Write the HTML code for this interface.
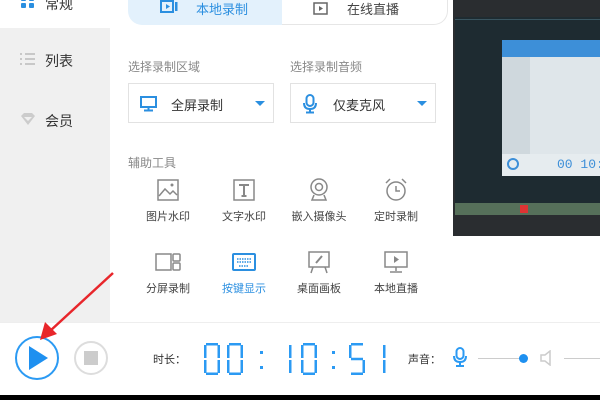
<!DOCTYPE html>
<html><head><meta charset="utf-8"><style>
*{margin:0;padding:0;box-sizing:border-box}
body{width:600px;height:400px;overflow:hidden;background:#fff;position:relative;font-family:"Liberation Sans","Noto Sans CJK SC",sans-serif;color:#333}
.a{position:absolute}
.side{left:0;top:28px;width:110px;height:294px;background:#f0f0f0}
.lbl{font-size:12px;color:#888}
.dd{border:1px solid #e2e2e2;background:#fff;height:40px;width:146px}
.dd span{position:absolute;left:42px;top:11px;font-size:13px;color:#333}
.tri{position:absolute;right:8px;top:17px;width:0;height:0;border-left:5px solid transparent;border-right:5px solid transparent;border-top:5px solid #2b8fe0}
.tool{position:absolute;width:70px;text-align:center;font-size:11px;color:#444}
.tool .ic{height:24px;margin-bottom:6px;display:flex;align-items:center;justify-content:center}
</style></head><body>
<div class="a side"></div>
<svg class="a" style="left:21px;top:-4px" width="14" height="12"><g fill="#2b8fe0"><rect x="0" y="0" width="5" height="5" rx="1"/><rect x="8" y="0" width="5" height="5" rx="1"/><rect x="0" y="7" width="5" height="5" rx="1"/><rect x="8" y="7" width="5" height="5" rx="1"/></g></svg>
<div class="a" style="left:45px;top:-6px;font-size:14px">常规</div>
<svg class="a" style="left:20px;top:52px" width="16" height="14"><g stroke="#bbb" stroke-width="1.5"><line x1="0" y1="2" x2="2" y2="2"/><line x1="5" y1="2" x2="15" y2="2"/><line x1="0" y1="7" x2="2" y2="7"/><line x1="5" y1="7" x2="15" y2="7"/><line x1="0" y1="12" x2="2" y2="12"/><line x1="5" y1="12" x2="15" y2="12"/></g></svg>
<div class="a" style="left:45px;top:51px;font-size:14px">列表</div>
<svg class="a" style="left:20px;top:112px" width="16" height="14"><path d="M1 4 L4 1 H12 L15 4 L8 13 Z" fill="#ccc"/><path d="M4 5 H12 L8 9Z" fill="#f0f0f0"/></svg>
<div class="a" style="left:45px;top:111px;font-size:14px">会员</div>

<div class="a" style="left:128px;top:-2px;width:154px;height:27px;background:#e3f1fc;border-radius:0 0 0 14px"></div>
<div class="a" style="left:282px;top:-2px;width:166px;height:27px;border:1px solid #e6e6e6;border-left:none;border-radius:0 0 14px 0"></div>
<svg class="a" style="left:160px;top:0" width="20" height="14"><rect x="1" y="1" width="12" height="11" fill="none" stroke="#2b8fe0" stroke-width="2"/><path d="M6 4 L10 6.5 L6 9Z" fill="#2b8fe0"/><rect x="15" y="2" width="2.5" height="9" fill="#2b8fe0"/></svg>
<div class="a" style="left:196px;top:-1px;font-size:13px;color:#2b8fe0">本地录制</div>
<svg class="a" style="left:313px;top:0" width="16" height="16"><rect x="1" y="3" width="13" height="11" fill="none" stroke="#666" stroke-width="1.5"/><path d="M6 6 L10 8.5 L6 11Z" fill="#666"/></svg>
<div class="a" style="left:347px;top:-1px;font-size:13px;color:#444">在线直播</div>

<div class="a lbl" style="left:128px;top:58px">选择录制区域</div>
<div class="a lbl" style="left:290px;top:58px">选择录制音频</div>
<div class="a dd" style="left:128px;top:83px"><svg class="a" style="left:11px;top:12px" width="18" height="16"><rect x="1" y="1" width="15" height="10" fill="none" stroke="#2b8fe0" stroke-width="2"/><rect x="7.5" y="11" width="2" height="3" fill="#2b8fe0"/><rect x="4" y="13.5" width="9" height="2" fill="#2b8fe0"/></svg><span>全屏录制</span><div class="tri"></div></div>
<div class="a dd" style="left:290px;top:83px"><svg class="a" style="left:11px;top:10px" width="16" height="20"><rect x="4.5" y="1" width="7" height="11" rx="3.5" fill="none" stroke="#2b8fe0" stroke-width="2"/><path d="M2 9 Q2 15 8 15 Q14 15 14 9" fill="none" stroke="#2b8fe0" stroke-width="2"/><rect x="7" y="15" width="2" height="3" fill="#2b8fe0"/><rect x="4" y="17.5" width="8" height="2" fill="#2b8fe0"/></svg><span>仅麦克风</span><div class="tri"></div></div>

<div class="a lbl" style="left:128px;top:154px">辅助工具</div>
<div class="tool" style="left:133px;top:178px"><div class="ic"><svg width="22" height="22"><rect x="1" y="1" width="20" height="20" fill="none" stroke="#888" stroke-width="1.5"/><path d="M2 17 L8 10 L13 15 L16 12 L20 16" fill="none" stroke="#888" stroke-width="1.5"/><circle cx="15" cy="6" r="1.5" fill="#888"/></svg></div>图片水印</div>
<div class="tool" style="left:209px;top:178px"><div class="ic"><svg width="22" height="22"><rect x="1" y="1" width="20" height="20" fill="none" stroke="#888" stroke-width="1.5"/><path d="M6 6 H16 M11 6 V17 M8.5 17 H13.5" stroke="#888" stroke-width="2" fill="none"/></svg></div>文字水印</div>
<div class="tool" style="left:284px;top:178px"><div class="ic"><svg width="22" height="24"><circle cx="11" cy="9" r="8" fill="none" stroke="#888" stroke-width="1.5"/><circle cx="11" cy="9" r="3.5" fill="none" stroke="#888" stroke-width="1.5"/><path d="M6 17 L4 22 H18 L16 17" fill="none" stroke="#888" stroke-width="1.5"/></svg></div>嵌入摄像头</div>
<div class="tool" style="left:361px;top:178px"><div class="ic"><svg width="24" height="24"><circle cx="12" cy="13" r="9" fill="none" stroke="#888" stroke-width="1.5"/><path d="M12 8 V13 H16 M2 5 L6 1 M22 5 L18 1" fill="none" stroke="#888" stroke-width="1.5"/></svg></div>定时录制</div>
<div class="tool" style="left:133px;top:250px"><div class="ic"><svg width="26" height="20"><rect x="1" y="2" width="15" height="16" fill="none" stroke="#888" stroke-width="1.5"/><rect x="18" y="2" width="7" height="7" rx="1" fill="none" stroke="#888" stroke-width="1.5"/><rect x="18" y="11" width="7" height="7" rx="1" fill="none" stroke="#888" stroke-width="1.5"/></svg></div>分屏录制</div>
<div class="tool" style="left:209px;top:250px;color:#2b8fe0"><div class="ic"><svg width="24" height="20"><rect x="1" y="2" width="22" height="16" rx="1" fill="none" stroke="#2b8fe0" stroke-width="2"/><path d="M5 7 H19 M5 10 H19 M7 14 H17" stroke="#2b8fe0" stroke-width="1.5" stroke-dasharray="1.5 1"/></svg></div>按键显示</div>
<div class="tool" style="left:284px;top:250px"><div class="ic"><svg width="24" height="24"><rect x="2" y="2" width="20" height="15" fill="none" stroke="#888" stroke-width="1.5"/><path d="M9 13 L15 6" stroke="#888" stroke-width="2"/><path d="M6 17 L4 23 M18 17 L20 23" stroke="#888" stroke-width="1.5"/></svg></div>桌面画板</div>
<div class="tool" style="left:361px;top:250px"><div class="ic"><svg width="24" height="24"><rect x="1" y="2" width="22" height="15" fill="none" stroke="#888" stroke-width="1.5"/><path d="M10 6 L15 9.5 L10 13Z" fill="#888"/><path d="M12 17 V21 M6 22 H18" stroke="#888" stroke-width="1.5"/></svg></div>本地直播</div>

<!-- preview -->
<div class="a" style="left:453px;top:0;width:147px;height:236px;background:#2a2d30"></div>
<div class="a" style="left:455px;top:17px;width:145px;height:186px;background:#1e2b31"></div>
<div class="a" style="left:455px;top:19px;width:145px;height:1px;background:#3a5560"></div>
<div class="a" style="left:502px;top:40px;width:98px;height:136px;background:#dfe6ea"></div>
<div class="a" style="left:502px;top:40px;width:98px;height:17px;background:#3d8fd8"></div>
<div class="a" style="left:502px;top:57px;width:28px;height:97px;background:#cfd8dd"></div>
<div class="a" style="left:502px;top:154px;width:98px;height:22px;background:#e6ecef"></div>
<div class="a" style="left:507px;top:158px;width:12px;height:12px;border:2px solid #3d8fd8;border-radius:50%"></div>
<div class="a" style="left:557px;top:157px;font-size:13px;color:#3d8fd8;font-family:'Liberation Mono';white-space:nowrap">00 10:</div>
<div class="a" style="left:455px;top:203px;width:145px;height:12px;background:#56705a"></div>
<div class="a" style="left:520px;top:205px;width:8px;height:8px;background:#d33"></div>

<!-- bottom -->
<div class="a" style="left:0;top:322px;width:600px;height:1px;background:#eee"></div>
<div class="a" style="left:0;top:395px;width:600px;height:5px;background:#000"></div>
<div class="a" style="left:15px;top:336px;width:44px;height:44px;border:2px solid #2b9af3;border-radius:50%"></div>
<svg class="a" style="left:26px;top:345px" width="24" height="26"><path d="M3 1 L22 13 L3 25Z" fill="#1e90f0"/></svg>
<div class="a" style="left:74px;top:341px;width:34px;height:34px;border:2px solid #ddd;border-radius:50%"></div>
<div class="a" style="left:84px;top:351px;width:14px;height:14px;background:#ccc"></div>
<svg class="a" style="left:0;top:0" width="600" height="400"><line x1="113" y1="273" x2="50" y2="331" stroke="#e8262b" stroke-width="2.5"/><path d="M40 340 L45 322 L57 334Z" fill="#e8262b"/></svg>
<div class="a" style="left:153px;top:351px;font-size:11px;color:#333">时长：</div>
<svg class="a" style="left:0;top:0" width="600" height="400" fill="#2b9af3">
<g transform="translate(204,343)"><rect x="2" y="0" width="12" height="2.5"/><rect x="0" y="2" width="2.5" height="13"/><rect x="13.5" y="2" width="2.5" height="13"/><rect x="0" y="17" width="2.5" height="13"/><rect x="13.5" y="17" width="2.5" height="13"/><rect x="2" y="29.5" width="12" height="2.5"/></g>
<g transform="translate(227,343)"><rect x="2" y="0" width="12" height="2.5"/><rect x="0" y="2" width="2.5" height="13"/><rect x="13.5" y="2" width="2.5" height="13"/><rect x="0" y="17" width="2.5" height="13"/><rect x="13.5" y="17" width="2.5" height="13"/><rect x="2" y="29.5" width="12" height="2.5"/></g>
<rect x="260" y="351" width="3" height="3"/><rect x="260" y="366" width="3" height="3"/>
<g transform="translate(289,343)"><rect x="0" y="2" width="2.5" height="13"/><rect x="0" y="17" width="2.5" height="13"/></g>
<g transform="translate(301,343)"><rect x="2" y="0" width="12" height="2.5"/><rect x="0" y="2" width="2.5" height="13"/><rect x="13.5" y="2" width="2.5" height="13"/><rect x="0" y="17" width="2.5" height="13"/><rect x="13.5" y="17" width="2.5" height="13"/><rect x="2" y="29.5" width="12" height="2.5"/></g>
<rect x="332" y="351" width="3" height="3"/><rect x="332" y="366" width="3" height="3"/>
<g transform="translate(349,343)"><rect x="2" y="0" width="12" height="2.5"/><rect x="0" y="2" width="2.5" height="13"/><rect x="2" y="14.75" width="12" height="2.5"/><rect x="13.5" y="17" width="2.5" height="13"/><rect x="2" y="29.5" width="12" height="2.5"/></g>
<g transform="translate(383,343)"><rect x="0" y="2" width="2.5" height="13"/><rect x="0" y="17" width="2.5" height="13"/></g>
</svg>
<div class="a" style="left:408px;top:351px;font-size:11px;color:#333">声音：</div>
<svg class="a" style="left:452px;top:347px" width="16" height="22"><rect x="4.5" y="1" width="7" height="11" rx="3.5" fill="none" stroke="#2b9af3" stroke-width="2"/><path d="M2 9 Q2 15 8 15 Q14 15 14 9" fill="none" stroke="#2b9af3" stroke-width="2"/><rect x="7" y="15" width="2" height="3" fill="#2b9af3"/><rect x="4" y="18" width="8" height="2" fill="#2b9af3"/></svg>
<div class="a" style="left:478px;top:358px;width:46px;height:1px;background:#ccc"></div>
<div class="a" style="left:519px;top:354px;width:9px;height:9px;border-radius:50%;background:#1e90f0"></div>
<svg class="a" style="left:540px;top:350px" width="14" height="16"><path d="M1 5 H5 L10 1 V15 L5 11 H1Z" fill="none" stroke="#ccc" stroke-width="1.5"/></svg>
<div class="a" style="left:564px;top:358px;width:36px;height:1px;background:#ccc"></div>
</body></html>
